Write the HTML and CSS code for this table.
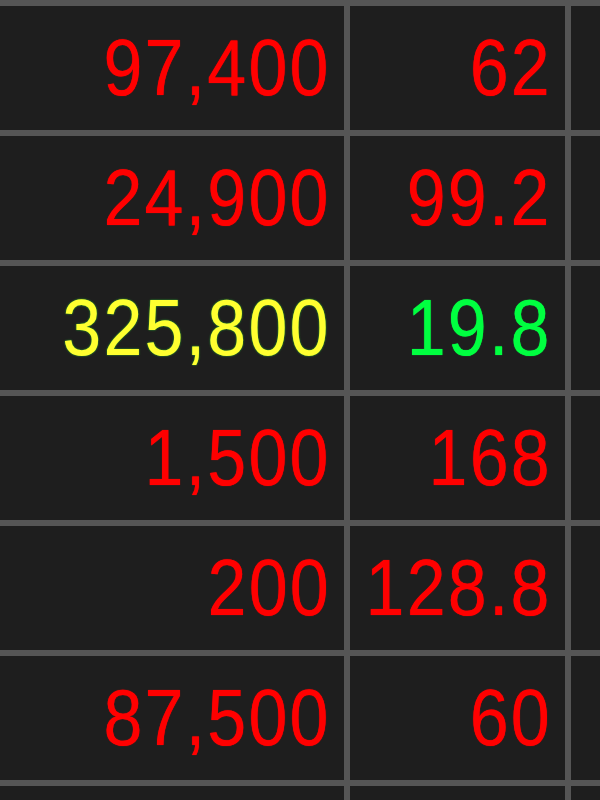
FILE: index.html
```html
<!DOCTYPE html>
<html lang="ja">
<head>
    <meta charset="UTF-8">
    <meta name="viewport" content="width=device-width, initial-scale=1.0">
    <title>Quotes</title>
    <link rel="stylesheet" href="styles.css">
</head>
<body>
    <div class="board">
        <div class="cell up"><span>97,400</span></div>
        <div class="cell up"><span>62</span></div>
        <div class="cell"></div>

        <div class="cell up"><span>24,900</span></div>
        <div class="cell up"><span>99.2</span></div>
        <div class="cell"></div>

        <div class="cell hot"><span>325,800</span></div>
        <div class="cell down"><span>19.8</span></div>
        <div class="cell"></div>

        <div class="cell up"><span>1,500</span></div>
        <div class="cell up"><span>168</span></div>
        <div class="cell"></div>

        <div class="cell up"><span>200</span></div>
        <div class="cell up"><span>128.8</span></div>
        <div class="cell"></div>

        <div class="cell up"><span>87,500</span></div>
        <div class="cell up"><span>60</span></div>
        <div class="cell"></div>

        <div class="cell"></div>
        <div class="cell"></div>
        <div class="cell"></div>
    </div>
</body>
</html>
```

FILE: styles.css
```css
* {
    margin: 0;
    padding: 0;
    box-sizing: border-box;
}

body {
    font-family: "Liberation Sans", Arial, sans-serif;
    background-color: #555;
    height: 100vh;
    overflow: hidden;
}

.board {
    display: grid;
    grid-template-columns: 344px 215px 1fr;
    grid-auto-rows: 124px;
    gap: 6px;
    padding-top: 6px;
    height: 800px;
    overflow: hidden;
    background: #555;
}

.cell {
    background: #1e1e1e;
    display: flex;
    align-items: center;
    justify-content: flex-end;
    padding-right: 13px;
    font-size: 80px;
    letter-spacing: 2.5px;
    line-height: 1;
    text-shadow: 0 0 1px currentColor;
}

.cell span {
    display: inline-block;
    transform: scaleX(0.875);
    transform-origin: right center;
}

.up {
    color: #ff0000;
}

.down {
    color: #00ff40;
}

.hot {
    color: #ffff30;
    text-shadow: 0 0 2px #3c3;
}
```
